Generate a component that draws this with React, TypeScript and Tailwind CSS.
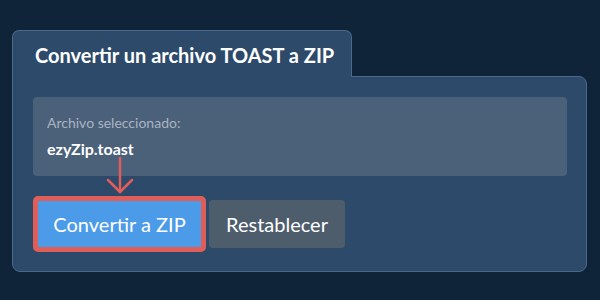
import React from "react";

export default function App() {
  return (
    <div
      className="w-[600px] h-[300px] bg-[#0f2439] pt-[30px] pl-[12px] relative overflow-hidden"
      style={{ fontFamily: "Lato, 'Open Sans', sans-serif" }}
    >
      <div className="w-[575px]">
        <div className="relative z-10 -mb-px w-[340px] h-[47px] bg-[#2d4a6a] border border-b-0 border-[#4a6888] rounded-t-[7px] pl-[22px] flex items-center">
          <span className="text-[20px] font-bold text-white leading-none pt-[1px]">Convertir un archivo TOAST a ZIP</span>
        </div>
        <div className="relative bg-[#2d4a6a] border border-[#4a6888] rounded-b-[8px] rounded-tr-[8px] pt-[20px] pb-[19px] pl-[20px] pr-[19px]">
          <div className="bg-[#4b6079] rounded-[4px] pt-[16px] pb-[16px] pl-[14px]">
            <div className="text-[14px] leading-[20px] text-[#a9b4c1]">Archivo seleccionado:</div>
            <div className="mt-[5px] text-[16px] leading-[22px] font-bold text-white">ezyZip.toast</div>
          </div>
          <div className="mt-[20px] flex items-center gap-[3px]">
            <div className="border-[5px] border-[#e05e5a] rounded-[5px]">
              <button className="h-[46px] w-[163px] bg-[#4c9be8] text-white text-[20px] leading-none flex items-center justify-center">
                Convertir a ZIP
              </button>
            </div>
            <button className="h-[48px] w-[136px] bg-[#4e5d6c] rounded-[4px] text-white text-[20px] leading-none flex items-center justify-center">
              Restablecer
            </button>
          </div>
          <svg
            className="absolute left-[93px] top-[80px]"
            width="28"
            height="38"
            viewBox="0 0 28 38"
            fill="none"
            stroke="#e05e5a"
            strokeWidth="2.5"
            strokeLinecap="round"
            strokeLinejoin="round"
          >
            <path d="M14 1 L14 35" />
            <path d="M2 23 L14 35 L26 23" />
          </svg>
        </div>
      </div>
    </div>
  );
}
